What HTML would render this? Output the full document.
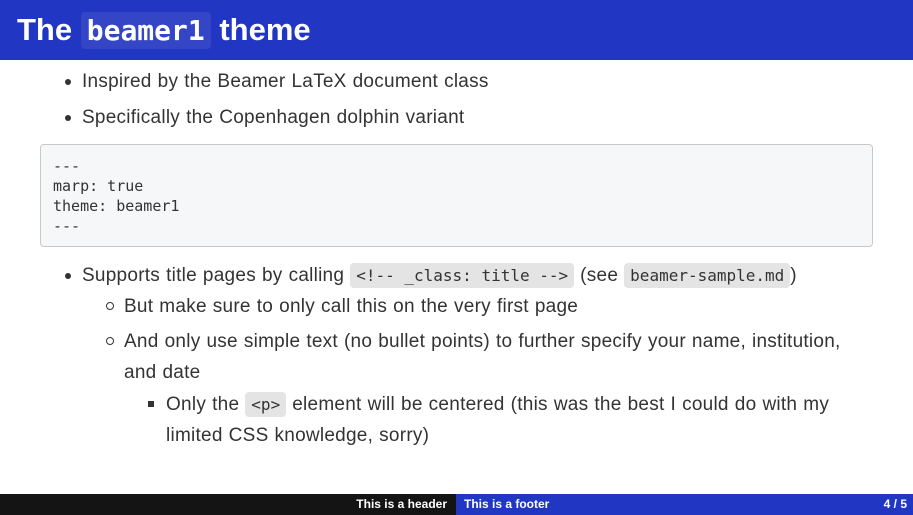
<!DOCTYPE html>
<html><head><meta charset="utf-8"><style>
*{margin:0;padding:0;box-sizing:border-box}
body{width:913px;height:515px;overflow:hidden;background:#fff;font-family:"Liberation Sans","DejaVu Sans",sans-serif;color:#333;position:relative}
.hdr{position:absolute;left:0;top:0;width:913px;height:60px;background:#2137c4;color:#fff;font-size:31px;font-weight:bold;line-height:60px;padding-left:17px}
.hdr code{font-family:"DejaVu Sans Mono","Liberation Mono",monospace;font-weight:bold;background:#3445c6;border-radius:4px;padding:2px 6px;font-size:28px}
.t{position:absolute;font-size:19px;line-height:31px;white-space:nowrap;letter-spacing:0.25px;word-spacing:0.5px}
.d{position:absolute;width:6px;height:6px;border-radius:50%;background:#333}
.c{position:absolute;width:8px;height:8px;border-radius:50%;border:1.3px solid #333}
.s{position:absolute;width:6px;height:6px;background:#333}
code.i{font-family:"DejaVu Sans Mono","Liberation Mono",monospace;font-size:16px;letter-spacing:0;word-spacing:0;background:#e4e4e4;border-radius:4px;padding:3px 6px}
pre{position:absolute;left:40px;top:144px;width:833px;height:103px;background:#f6f7f8;border:1px solid #c8c8c8;border-radius:4px;font-family:"DejaVu Sans Mono","Liberation Mono",monospace;font-size:15px;line-height:20px;padding:11px 12px;color:#333}
.fl{position:absolute;left:0;top:494px;width:456px;height:21px;background:#141414;color:#fff;font-size:12px;font-weight:bold;line-height:21px;text-align:right;padding-right:9px}
.fr{position:absolute;left:456px;top:494px;width:457px;height:21px;background:#2137c4;color:#fff;font-size:12px;font-weight:bold;line-height:21px;padding-left:8px}
.fr span{position:absolute;right:6px}
</style></head><body>
<div class="hdr">The <code>beamer1</code> theme</div>
<div class="d" style="left:65px;top:79px"></div><div class="t" style="left:82px;top:66px">Inspired by the Beamer LaTeX document class</div>
<div class="d" style="left:65px;top:115px"></div><div class="t" style="left:82px;top:102px">Specifically the Copenhagen dolphin variant</div>
<pre>---
marp: true
theme: beamer1
---</pre>
<div class="d" style="left:65px;top:273px"></div><div class="t" style="left:82px;top:260px">Supports title pages by calling <code class="i">&lt;!-- _class: title --&gt;</code> (see <code class="i">beamer-sample.md</code>)</div>
<div class="c" style="left:106px;top:302px"></div><div class="t" style="left:124px;top:291px">But make sure to only call this on the very first page</div>
<div class="c" style="left:106px;top:337px"></div><div class="t" style="left:124px;top:326px">And only use simple text (no bullet points) to further specify your name, institution,</div>
<div class="t" style="left:124px;top:357px">and date</div>
<div class="s" style="left:148px;top:401px"></div><div class="t" style="left:166px;top:389px">Only the <code class="i">&lt;p&gt;</code> element will be centered (this was the best I could do with my</div>
<div class="t" style="left:166px;top:420px">limited CSS knowledge, sorry)</div>
<div class="fl">This is a header</div>
<div class="fr">This is a footer<span>4 / 5</span></div>
</body></html>
